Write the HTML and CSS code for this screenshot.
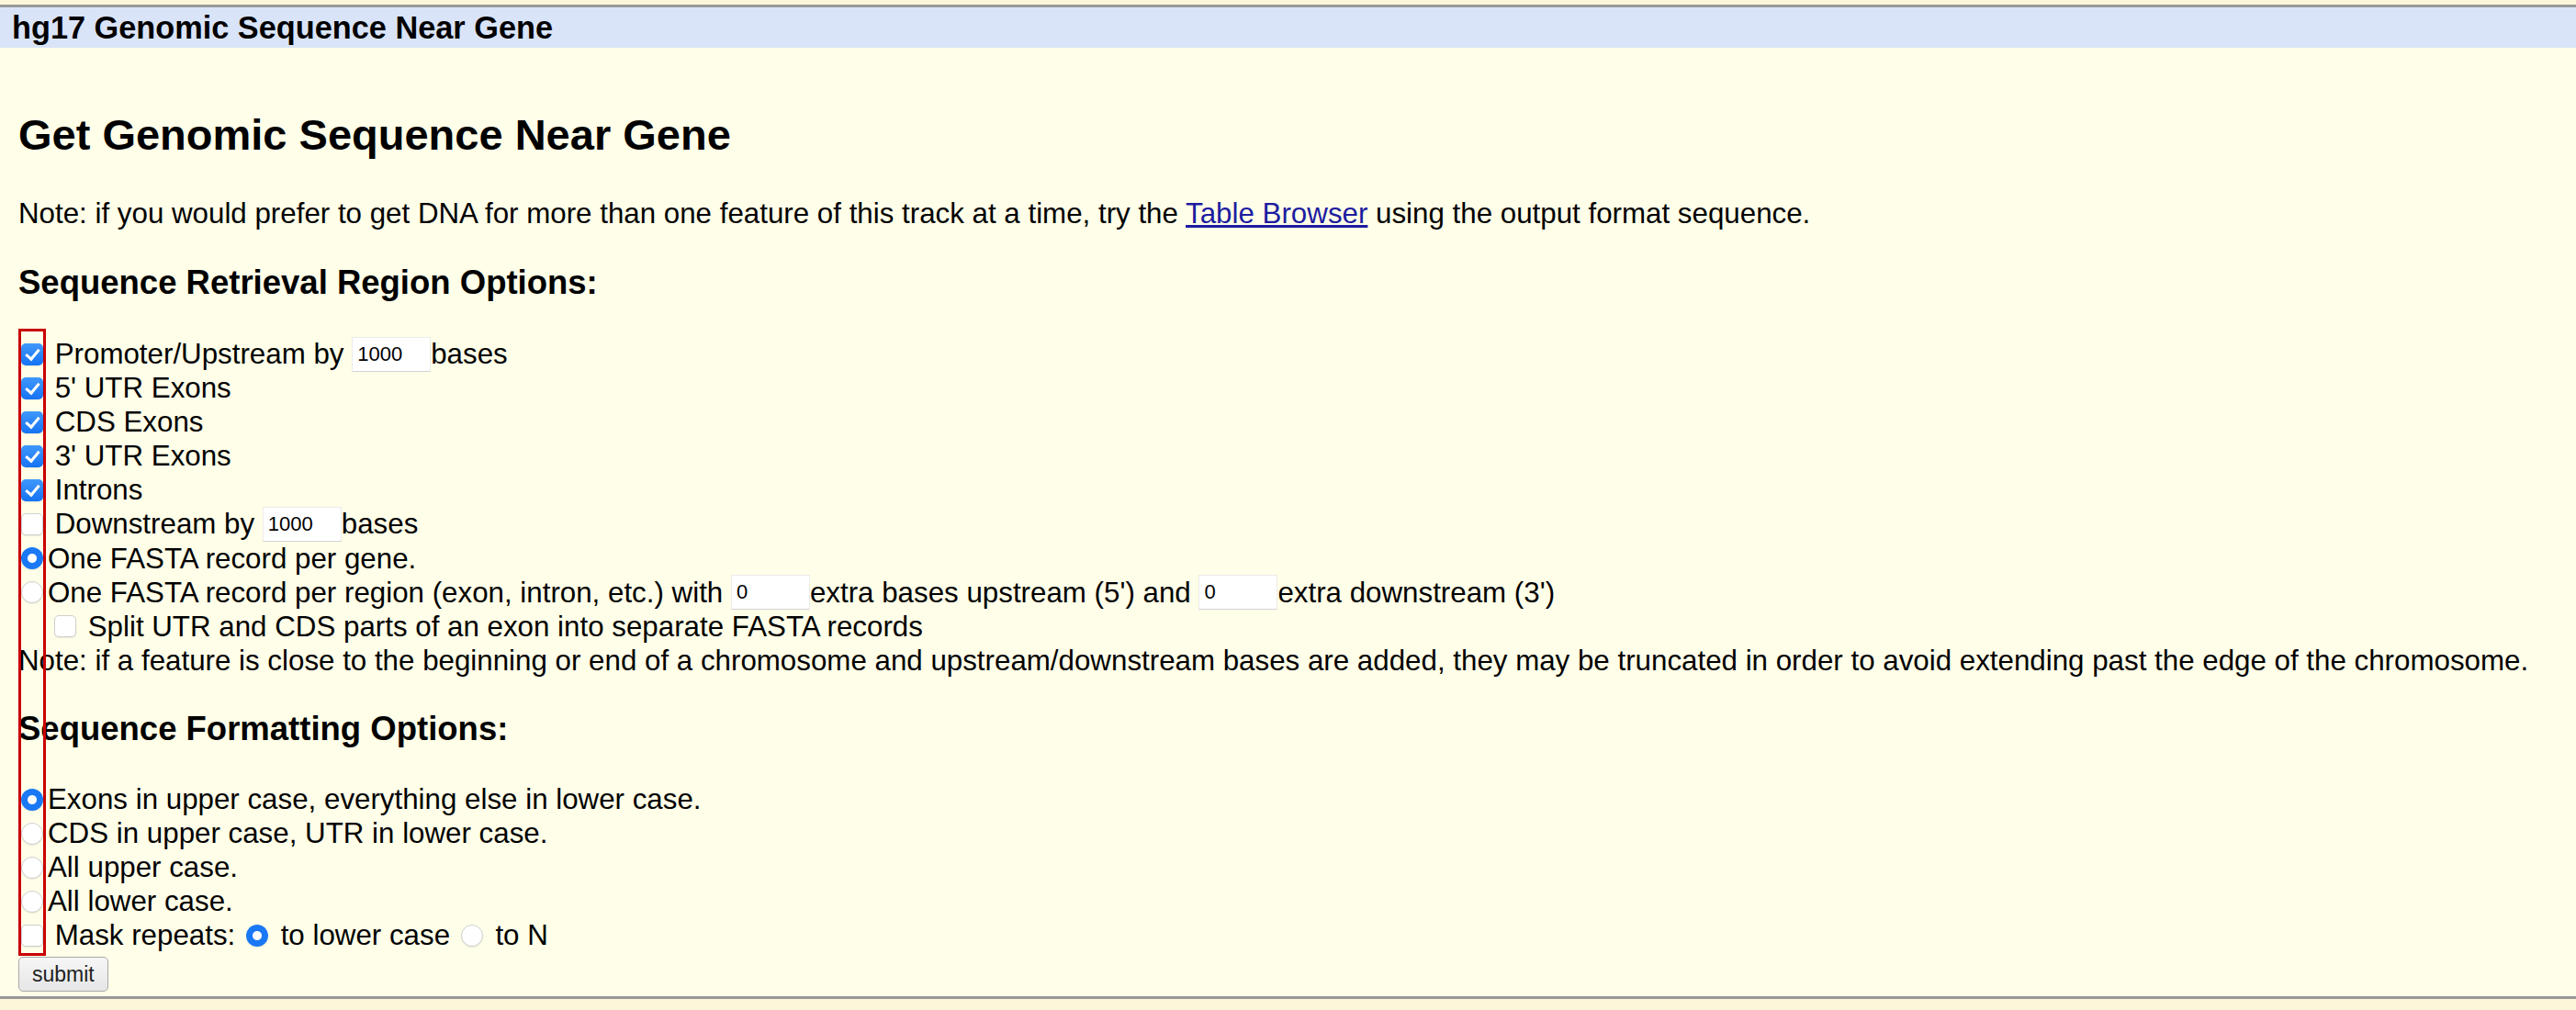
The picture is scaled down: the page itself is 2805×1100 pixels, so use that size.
FILE: index.html
```html
<!DOCTYPE html>
<html lang="en">
<head>
<meta charset="utf-8">
<title>hg17 Genomic Sequence Near Gene</title>
<link rel="stylesheet" href="styles.css">
</head>
<body>
<div class="topstrip"></div>
<div class="titlebar">hg17 Genomic Sequence Near Gene</div>
<main class="content">
  <h1 class="page-title">Get Genomic Sequence Near Gene</h1>
  <p class="note">Note: if you would prefer to get DNA for more than one feature of this track at a time, try the <a href="#" class="link">Table Browser</a> using the output format sequence.</p>
  <h3 class="section-title">Sequence Retrieval Region Options:</h3>
  <form class="form">
    <div class="rows region-rows">
      <div class="row"><input type="checkbox" class="cb" checked> Promoter/Upstream by <input type="text" class="num" value="1000">bases</div>
      <div class="row"><input type="checkbox" class="cb" checked> 5' UTR Exons</div>
      <div class="row"><input type="checkbox" class="cb" checked> CDS Exons</div>
      <div class="row"><input type="checkbox" class="cb" checked> 3' UTR Exons</div>
      <div class="row"><input type="checkbox" class="cb" checked> Introns</div>
      <div class="row"><input type="checkbox" class="cb"> Downstream by <input type="text" class="num" value="1000">bases</div>
      <div class="row"><input type="radio" class="rb" name="rec" checked>One FASTA record per gene.</div>
      <div class="row"><input type="radio" class="rb" name="rec">One FASTA record per region (exon, intron, etc.) with <input type="text" class="num" value="0">extra bases upstream (5') and <input type="text" class="num" value="0">extra downstream (3')</div>
      <div class="row indent"><input type="checkbox" class="cb"> Split UTR and CDS parts of an exon into separate FASTA records</div>
      <div class="row">Note: if a feature is close to the beginning or end of a chromosome and upstream/downstream bases are added, they may be truncated in order to avoid extending past the edge of the chromosome.</div>
    </div>
    <h3 class="section-title">Sequence Formatting Options:</h3>
    <div class="rows">
      <div class="row"><input type="radio" class="rb" name="fmt" checked>Exons in upper case, everything else in lower case.</div>
      <div class="row"><input type="radio" class="rb" name="fmt">CDS in upper case, UTR in lower case.</div>
      <div class="row"><input type="radio" class="rb" name="fmt">All upper case.</div>
      <div class="row"><input type="radio" class="rb" name="fmt">All lower case.</div>
      <div class="row"><input type="checkbox" class="cb"> Mask repeats: <input type="radio" class="rb" name="mask" checked> to lower case <input type="radio" class="rb" name="mask"> to N</div>
    </div>
    <button type="button" class="submit">submit</button>
  </form>
</main>
<div class="bottomstrip"></div>
<div class="annotation"></div>
</body>
</html>
```

FILE: styles.css
```css
html, body {
  margin: 0;
  padding: 0;
}

body {
  background: #fffee8;
  font-family: "Liberation Sans", Arial, sans-serif;
  color: #000;
  position: relative;
  min-height: 1100px;
}

.topstrip {
  height: 5px;
  background: #fdf6d8;
  border-bottom: 3px solid #999999;
}

.titlebar {
  background: #d9e4f8;
  height: 44px;
  line-height: 45px;
  padding-left: 13px;
  font-size: 34.3px;
  font-weight: bold;
}

.content {
  padding: 0 20px;
}

.page-title {
  margin: 68px 0 0;
  font-size: 47px;
  line-height: 54px;
  font-weight: bold;
}

.note {
  margin: 40px 0 0;
  font-size: 31.3px;
  line-height: 37px;
}

.link {
  color: #1c1ca0;
  text-decoration: underline;
}

.section-title {
  margin: 36px 0 0;
  font-size: 36.5px;
  line-height: 42px;
  font-weight: bold;
}

.form {
  margin: 0;
}

.rows {
  margin-top: 37.5px;
  font-size: 31.3px;
}

.region-rows {
  margin-top: 38px;
}

.region-rows .row {
  height: 37.1px;
  line-height: 37.1px;
}

.form > .section-title {
  margin-top: 35px;
}

.row {
  height: 37px;
  line-height: 37px;
  white-space: nowrap;
}

.indent {
  padding-left: 36px;
}

.cb,
.rb {
  -webkit-appearance: none;
  appearance: none;
  width: 24px;
  height: 24px;
  margin: 0 4px 0 3px;
  vertical-align: middle;
  position: relative;
  top: -2px;
  box-sizing: border-box;
  background: #fff;
  border: 1px solid #cfcfcf;
  box-shadow: 0 1px 1px rgba(0, 0, 0, 0.08);
}

.cb {
  border-radius: 5px;
}

.cb:checked {
  border: none;
  background: linear-gradient(#3f98fb, #1673f3);
}

.cb:checked::after {
  content: "";
  position: absolute;
  left: 8px;
  top: 3px;
  width: 6px;
  height: 12px;
  border-right: 3px solid #fff;
  border-bottom: 3px solid #fff;
  transform: rotate(40deg);
}

.rb {
  border-radius: 50%;
  margin: 0 5px 0 3px;
}

.rb:checked {
  border: none;
  background: radial-gradient(circle, #fff 0 4.5px, #1a78f5 5.5px);
}

.num {
  width: 86px;
  height: 38px;
  box-sizing: border-box;
  margin: 0;
  padding: 0 5px;
  font-family: "Liberation Sans", Arial, sans-serif;
  font-size: 22px;
  vertical-align: middle;
  position: relative;
  top: -2px;
  background: #fff;
  border: 1px solid #ececec;
  border-bottom-color: #d4d4d4;
  outline: none;
}

.submit {
  display: block;
  margin: 5px 0 5px;
  height: 38px;
  padding: 0 14px;
  font-family: "Liberation Sans", Arial, sans-serif;
  font-size: 23px;
  color: #222;
  background: linear-gradient(#f6f6f6, #e6e6e6);
  border: 1px solid #a9a9a9;
  border-radius: 5px;
}

.bottomstrip {
  border-top: 3px solid #999999;
  height: 14px;
  background: #fdf6d8;
}

.annotation {
  position: absolute;
  left: 20px;
  top: 358px;
  width: 30px;
  height: 683px;
  box-sizing: border-box;
  border: 3px solid #c80000;
  pointer-events: none;
}
```
